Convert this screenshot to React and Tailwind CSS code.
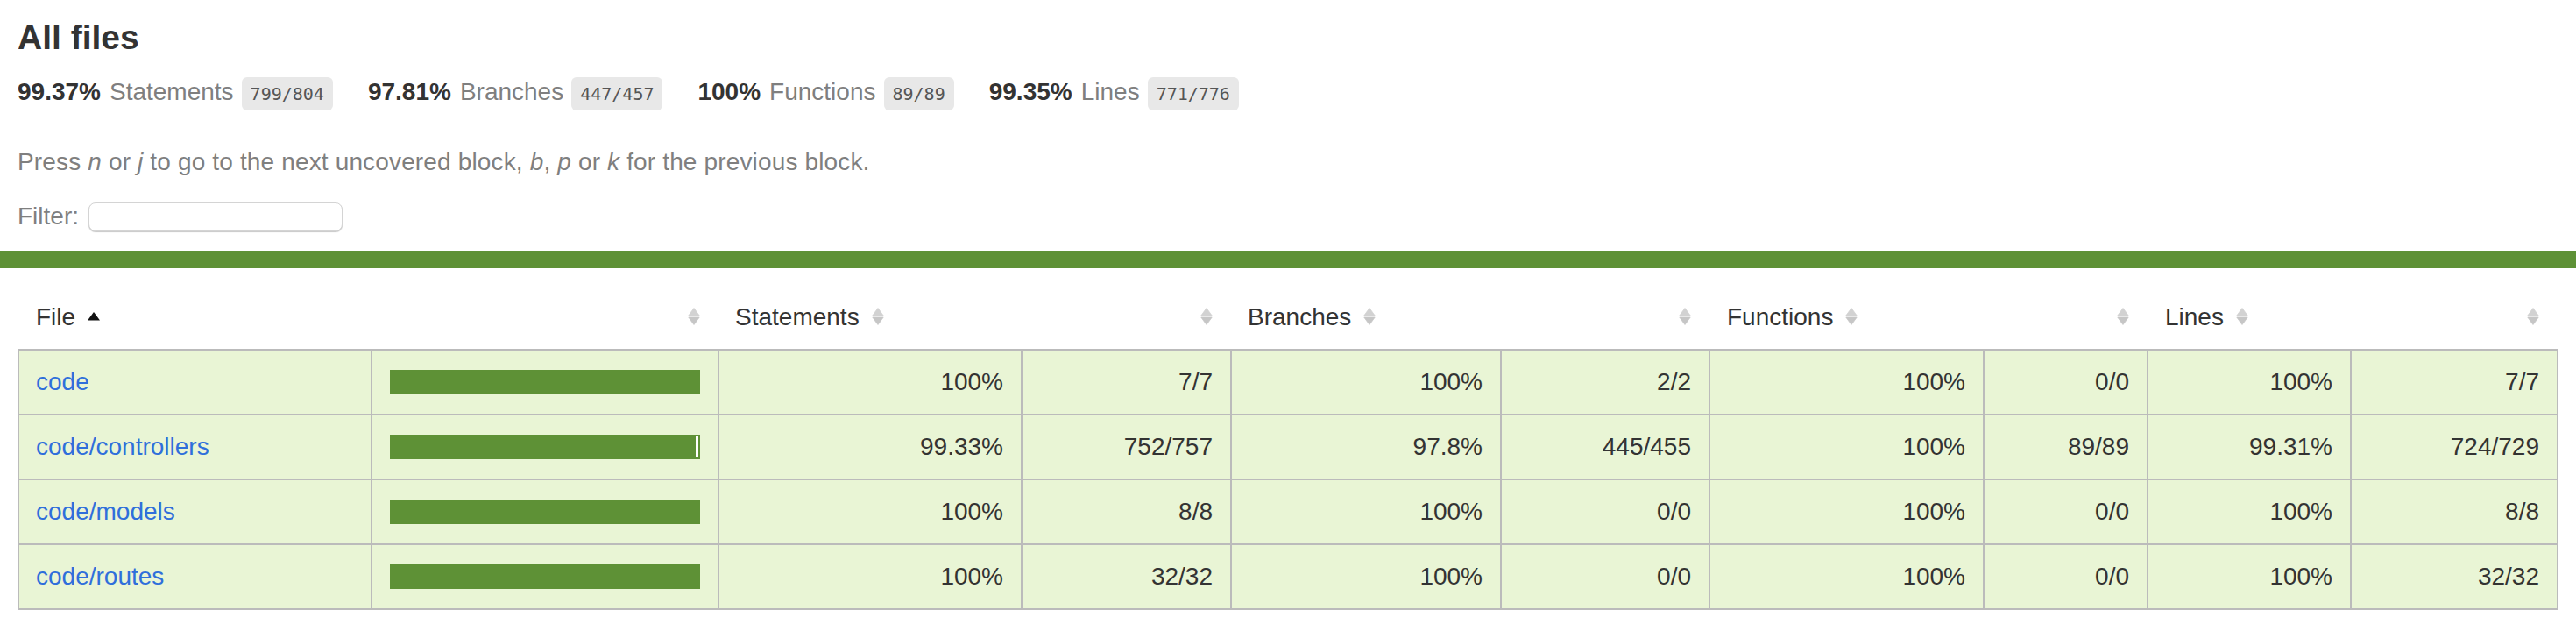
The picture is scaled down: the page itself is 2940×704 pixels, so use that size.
import React from "react";

const COLS =
  "grid grid-cols-[403px_396px_346px_239px_308px_238px_313px_187px_232px_234px]";

const rows = [
  { name: "code", pct: 100, cells: ["100%", "7/7", "100%", "2/2", "100%", "0/0", "100%", "7/7"] },
  { name: "code/controllers", pct: 99, cells: ["99.33%", "752/757", "97.8%", "445/455", "100%", "89/89", "99.31%", "724/729"] },
  { name: "code/models", pct: 100, cells: ["100%", "8/8", "100%", "0/0", "100%", "0/0", "100%", "8/8"] },
  { name: "code/routes", pct: 100, cells: ["100%", "32/32", "100%", "0/0", "100%", "0/0", "100%", "32/32"] },
];

const stats = [
  { pct: "99.37%", label: "Statements", frac: "799/804" },
  { pct: "97.81%", label: "Branches", frac: "447/457" },
  { pct: "100%", label: "Functions", frac: "89/89" },
  { pct: "99.35%", label: "Lines", frac: "771/776" },
];

function Sorter() {
  return (
    <svg width="14" height="20" viewBox="0 0 14 20" className="ml-[14px] inline-block align-baseline">
      <path d="M7 0.5 L13.2 9 L0.8 9 Z" fill="#d2d2d2" strokeLinejoin="round" stroke="#d2d2d2" strokeWidth="0.8" />
      <path d="M0.8 11 L13.2 11 L7 19.5 Z" fill="#c6c6c6" strokeLinejoin="round" stroke="#c6c6c6" strokeWidth="0.8" />
    </svg>
  );
}

function SortedUp() {
  return (
    <svg width="14" height="20" viewBox="0 0 14 20" className="ml-[14px] inline-block align-baseline">
      <path d="M7 5 L14 14.5 L0 14.5 Z" fill="#111" />
    </svg>
  );
}

function Stat({ pct, label, frac }) {
  return (
    <div className="flex items-baseline pr-10 leading-[32px]">
      <span className="font-bold">{pct}</span>
      <span className="ml-[10px] text-[#7f7f7f]">{label}</span>
      <span className="ml-[9px] rounded-[6px] bg-[#e8e8e8] px-[10px] py-2 font-['DejaVu_Sans_Mono',monospace] text-[20px] leading-[22px] text-[#555]">
        {frac}
      </span>
    </div>
  );
}

function Bar({ pct }) {
  return (
    <div className="flex h-[32px] items-center">
      <div className="flex h-[28px] w-full border-2 border-[#5e9136]">
        <div className="h-full bg-[#5e9136]" style={{ width: pct + "%" }} />
        <div className="h-full flex-1 bg-white" />
      </div>
    </div>
  );
}

export default function App() {
  const headerCell = "py-5 leading-[32px] whitespace-nowrap border-r-2 border-transparent";
  const cell = "py-5 leading-[32px] whitespace-nowrap";
  return (
    <div className="min-h-[704px] w-full bg-white font-['Liberation_Sans',Arial,Helvetica,sans-serif] text-[28px] text-[#333]">
      <div className="px-5 pt-5 pb-[22px]">
        <h1 className="text-[39px] font-bold leading-[46px]">All files</h1>
        <div className="mt-[22px] flex items-baseline">
          {stats.map((s) => (
            <Stat key={s.label} {...s} />
          ))}
        </div>
        <p className="mt-[43px] leading-[32px] tracking-[0.15px] text-[#7f7f7f]">
          Press <em className="italic">n</em> or <em className="italic">j</em> to go to the next uncovered block,{" "}
          <em className="italic">b</em>, <em className="italic">p</em> or <em className="italic">k</em> for the previous block.
        </p>
        <div className="mt-[29px] flex h-[34px] items-center text-[#7f7f7f]">
          <span className="leading-[32px]">Filter:</span>
          <input
            type="search"
            className="ml-[11px] h-[33px] w-[290px] rounded-[8px] border border-[#d4d4d4] bg-white shadow-[0_1px_1px_rgba(0,0,0,0.22)] outline-none"
          />
        </div>
      </div>
      <div className="h-5 bg-[#5e9136]" />
      <div className="px-5 pt-5">
        <div className={COLS + " px-[2px]"}>
          <div className={headerCell + " pl-[19px] pr-5"}>
            File
            <SortedUp />
          </div>
          <div className={headerCell + " px-5 text-right"}>
            <Sorter />
          </div>
          <div className={headerCell + " pl-[18px] pr-5"}>
            Statements
            <Sorter />
          </div>
          <div className={headerCell + " px-5 text-right"}>
            <Sorter />
          </div>
          <div className={headerCell + " pl-[18px] pr-5"}>
            Branches
            <Sorter />
          </div>
          <div className={headerCell + " px-5 text-right"}>
            <Sorter />
          </div>
          <div className={headerCell + " pl-[19px] pr-5"}>
            Functions
            <Sorter />
          </div>
          <div className={headerCell + " px-5 text-right"}>
            <Sorter />
          </div>
          <div className={headerCell + " pl-[19px] pr-5"}>
            Lines
            <Sorter />
          </div>
          <div className="px-5 py-5 text-right leading-[32px]">
            <Sorter />
          </div>
        </div>
        <div className="border-2 border-[#bbb] bg-[#e9f5d5]">
          {rows.map((r, i) => (
            <div key={r.name} className={COLS + (i < rows.length - 1 ? " border-b-2 border-[#bbb]" : "")}>
              <div className={cell + " pl-[19px] pr-5 border-r-2 border-[#bbb]"}>
                <a href="#" className="text-[#2f6fdb]">
                  {r.name}
                </a>
              </div>
              <div className={"px-5 py-5 border-r-2 border-[#bbb]"}>
                <Bar pct={r.pct} />
              </div>
              {r.cells.map((c, j) => (
                <div
                  key={j}
                  className={cell + " px-5 text-right" + (j < r.cells.length - 1 ? " border-r-2 border-[#bbb]" : "")}
                >
                  {c}
                </div>
              ))}
            </div>
          ))}
        </div>
      </div>
    </div>
  );
}
